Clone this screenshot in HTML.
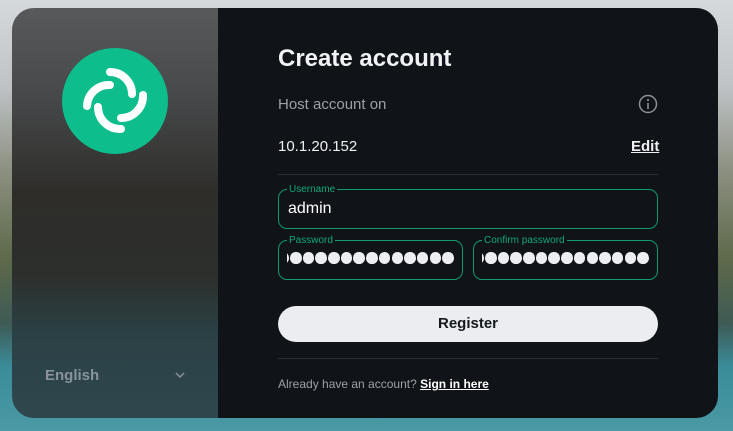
<!DOCTYPE html>
<html><head><style>
*{margin:0;padding:0;box-sizing:border-box}
body{width:733px;height:431px;overflow:hidden;font-family:"Liberation Sans",sans-serif;position:relative;
background:linear-gradient(180deg,#d6d9dc 0%,#bfc3c6 20%,#8b8f80 40%,#5e6a4a 60%,#3f5a55 75%,#3a8c98 85%,#4a9aa6 100%);}
.card{position:absolute;left:12px;top:8px;width:706px;height:410px;border-radius:22px;overflow:hidden;display:flex}
.left{width:206px;height:100%;position:relative;
background:linear-gradient(180deg,#58595b 0%,#47484a 22%,#2e2d2a 45%,#2c2f2c 65%,#2b4146 80%,#2e474d 100%);}
.logo{position:absolute;left:50px;top:40px;width:106px;height:106px;border-radius:50%;background:#0dbd8b}
.lang{position:absolute;left:33px;top:359px;color:#8a939c;font-weight:bold;font-size:15px}
.chev{position:absolute;left:163px;top:363px}
.right{flex:1;background:#101317;position:relative;color:#e8eaed}
h1{position:absolute;left:60px;top:37px;font-size:24px;font-weight:bold;color:#f0f2f4}
.host{position:absolute;left:60px;top:88px;font-size:15px;color:#9aa1a9}
.info{position:absolute;left:420px;top:86px}
.ip{position:absolute;left:60px;top:130px;font-size:15px;color:#eef0f2}
.edit{position:absolute;left:413px;top:130px;font-size:15px;font-weight:bold;text-decoration:underline;color:#eef0f2}
.hr{position:absolute;left:60px;width:380px;height:1px;background:#2c3036}
.field{position:absolute;border:1px solid #129a6c;border-radius:9px;height:40px}
.field label{position:absolute;left:8px;top:-6px;font-size:10px;color:#12a777;background:#101317;padding:0 2px;line-height:11px}
.field .v{position:absolute;left:9px;top:10px;font-size:16px;color:#fff}
.dots{position:absolute;left:8px;top:11px;width:167px;height:14px;overflow:hidden}
.dots div{position:absolute;left:-9.7px;top:0;display:flex;gap:1.2px}
.dots i{width:11.5px;height:11.5px;border-radius:50%;background:#eceef2;display:block;flex:none}
.btn{position:absolute;left:60px;top:298px;width:380px;height:36px;border-radius:18px;background:#ebedf1;color:#15191e;font-weight:bold;font-size:15px;text-align:center;line-height:36px}
.foot{position:absolute;left:60px;top:369px;font-size:12px;color:#9aa1a9}
.foot b{color:#fff;text-decoration:underline}
</style></head><body>
<div class="card">
<div class="left">
<div class="logo"><svg width="106" height="106" viewBox="0 0 106 106" fill="none" stroke="#fff" stroke-width="8" stroke-linecap="round">
<path d="M48 24 A22 22 0 0 1 70 46"/><path d="M48 37 A22 22 0 0 0 25 58"/><path d="M36 59 A22 22 0 0 0 59 81"/><path d="M81 47 A22 22 0 0 1 59 70"/></svg></div>
<div class="lang">English</div>
<svg class="chev" width="10" height="8" viewBox="0 0 10 8"><path d="M1 2 L5 6 L9 2" stroke="#8a939c" stroke-width="1.5" fill="none"/></svg>
</div>
<div class="right">
<h1>Create account</h1>
<div class="host">Host account on</div>
<svg class="info" width="20" height="20" viewBox="0 0 20 20"><circle cx="10" cy="10" r="8.5" stroke="#8a9099" stroke-width="1.5" fill="none"/><circle cx="10" cy="6" r="1.1" fill="#8a9099"/><path d="M10 9v6" stroke="#8a9099" stroke-width="1.6"/></svg>
<div class="ip">10.1.20.152</div>
<div class="edit">Edit</div>
<div class="hr" style="top:166px"></div>
<div class="field" style="left:60px;top:181px;width:380px"><label>Username</label><div class="v">admin</div></div>
<div class="field" style="left:60px;top:232px;width:185px"><label>Password</label><div class="dots"><div><i></i><i></i><i></i><i></i><i></i><i></i><i></i><i></i><i></i><i></i><i></i><i></i><i></i><i></i></div></div></div>
<div class="field" style="left:255px;top:232px;width:185px"><label>Confirm password</label><div class="dots"><div><i></i><i></i><i></i><i></i><i></i><i></i><i></i><i></i><i></i><i></i><i></i><i></i><i></i><i></i></div></div></div>
<div class="btn">Register</div>
<div class="hr" style="top:350px"></div>
<div class="foot">Already have an account? <b>Sign in here</b></div>
</div>
</div>
</body></html>
